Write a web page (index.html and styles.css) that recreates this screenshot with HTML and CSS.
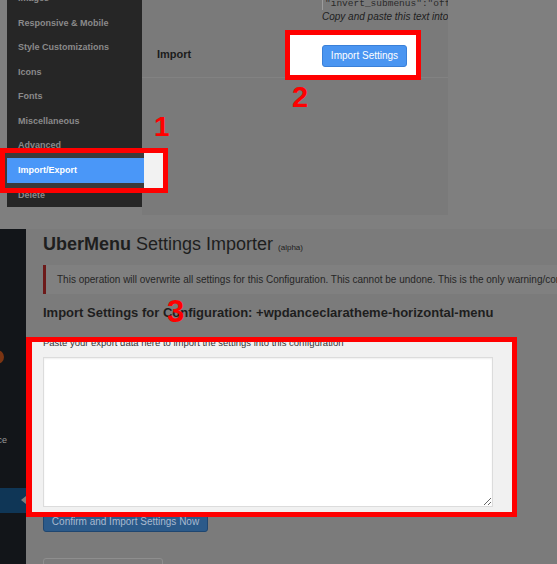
FILE: index.html
```html
<!DOCTYPE html>
<html lang="en">
<head>
<meta charset="utf-8">
<title>UberMenu Import/Export</title>
<link rel="stylesheet" href="styles.css">
</head>
<body>
<section class="shot-top">
  <nav class="um-nav">
    <div class="um-item um-first">Images</div>
    <div class="um-item">Responsive &amp; Mobile</div>
    <div class="um-item">Style Customizations</div>
    <div class="um-item">Icons</div>
    <div class="um-item">Fonts</div>
    <div class="um-item">Miscellaneous</div>
    <div class="um-item">Advanced</div>
    <div class="spot spot-nav"><div class="um-item um-active">Import/Export</div></div>
    <div class="um-item">Delete</div>
  </nav>
  <div class="um-panel">
    <div class="opt-row opt-export">
      <div class="opt-label"></div>
      <div class="opt-value">
        <div class="code-box">"invert_submenus":"off",</div>
        <p class="opt-desc">Copy and paste this text into</p>
      </div>
    </div>
    <div class="opt-row opt-import">
      <div class="opt-label">Import</div>
      <div class="opt-value">
        <div class="spot spot-btn"><button class="btn-blue" type="button">Import Settings</button></div>
      </div>
    </div>
  </div>
  <span class="callout callout-1">1</span>
  <span class="callout callout-2">2</span>
</section>
<section class="shot-bottom">
  <aside class="wp-menu">
    <div class="wp-ico"></div>
    <div class="wp-label"><span>Appearance</span></div>
    <div class="wp-active"></div>
  </aside>
  <main class="wp-main">
    <h1 class="imp-title"><strong>UberMenu</strong> Settings Importer <small>(alpha)</small></h1>
    <div class="notice">This operation will overwrite all settings for this Configuration. This cannot be undone. This is the only warning/confirmation you will receive.</div>
    <h3 class="imp-heading">Import Settings for Configuration: +wpdanceclaratheme-horizontal-menu</h3>
    <div class="spot spot-area">
      <p class="paste-hint"><span>Paste your export data here to import the settings into this configuration</span></p>
      <textarea class="import-data"></textarea>
    </div>
    <button class="btn-confirm" type="button">Confirm and Import Settings Now</button>
    <div class="ghost-box"></div>
  </main>
  <span class="callout callout-3">3</span>
</section>
</body>
</html>
```
FILE: styles.css
```css
* { box-sizing: border-box; }
html, body { margin: 0; padding: 0; }
body {
  width: 557px;
  height: 564px;
  overflow: hidden;
  background: #7b7b7b;
  font-family: "Liberation Sans", Arial, sans-serif;
}

/* ---------- top screenshot ---------- */
.shot-top {
  position: relative;
  height: 229px;
  display: flex;
  align-items: flex-start;
  background: #7f7f7f;
  overflow: hidden;
}
.um-nav {
  flex: none;
  margin-left: 7px;
  width: 135px;
  height: 207px;
  background: #262626;
  display: flex;
  flex-direction: column;
}
.um-item {
  flex: none;
  height: 24.6px;
  line-height: 24.6px;
  padding-left: 11px;
  font-size: 9px;
  font-weight: bold;
  color: #8a8a8a;
  white-space: nowrap;
}
.um-first { margin-top: -14.1px; }
.um-active {
  margin-left: 2px;
  width: 137px;
  background: #4a97f8;
  color: #ffffff;
}
.spot {
  position: relative;
  z-index: 1;
  border: 5px solid #ff0000;
}
.spot-nav {
  flex: none;
  width: 168px;
  margin: -10px 0 -10px -7px;
  padding: 5px 0;
  background: linear-gradient(to right, #3b3b3b 139px, #f2f2f2 139px);
}
.um-panel {
  flex: none;
  width: 306px;
  height: 215px;
  background: #7a7a7a;
  overflow: hidden;
}
.opt-row { display: flex; }
.opt-label {
  flex: none;
  width: 180px;
  padding-left: 15px;
  font-size: 11px;
  font-weight: bold;
  color: #1c1c1c;
}
.opt-value { flex: 1; min-width: 0; }
.code-box {
  margin-top: -4px;
  padding: 2px 0 1px 2px;
  border-left: 1px solid #9c9c9c;
  font-family: "Liberation Mono", monospace;
  font-size: 9.5px;
  line-height: 11px;
  color: #2a2a2a;
  white-space: nowrap;
}
.opt-desc {
  margin: 0.7px 0 0;
  font-size: 10px;
  line-height: 12px;
  font-style: italic;
  color: #202020;
  white-space: nowrap;
}
.opt-import {
  padding-top: 7.3px;
  align-items: center;
  border-bottom: 1px solid #828282;
}
.opt-import .opt-label { padding-top: 1px; }
.spot-btn {
  width: 136px;
  margin: 0 0 -3px -37px;
  padding: 10px 9px 8px 32px;
  background: #ffffff;
}
.btn-blue {
  display: block;
  width: 85px;
  height: 22px;
  padding: 0;
  background: #4a95f1;
  border: 1px solid #3a80d8;
  border-radius: 3px;
  color: #ffffff;
  font-family: "Liberation Sans", Arial, sans-serif;
  font-size: 10px;
}
.callout {
  position: absolute;
  color: #ff0000;
  font-weight: bold;
  font-size: 28px;
  line-height: 28px;
}
.callout-1 { left: 154px; top: 113px; }
.callout-2 { left: 292px; top: 83px; font-size: 29px; }

/* ---------- bottom screenshot ---------- */
.shot-bottom {
  position: relative;
  height: 335px;
  display: flex;
  overflow: hidden;
}
.wp-menu {
  flex: none;
  width: 26px;
  background: #121519;
  display: flex;
  flex-direction: column;
  overflow: hidden;
}
.wp-ico {
  flex: none;
  width: 14px;
  height: 14px;
  margin: 121px 0 0 -10px;
  border-radius: 50%;
  background: #7b3412;
}
.wp-label {
  flex: none;
  height: 12px;
  margin-top: 70px;
  padding-right: 19px;
  display: flex;
  justify-content: flex-end;
  font-size: 9px;
  line-height: 12px;
  color: #9a9a9a;
  white-space: nowrap;
}
.wp-active {
  flex: none;
  position: relative;
  height: 25px;
  margin-top: 42px;
  background: #0f3656;
}
.wp-active::after {
  content: "";
  position: absolute;
  right: 0;
  top: 8px;
  border-top: 4.5px solid transparent;
  border-bottom: 4.5px solid transparent;
  border-right: 5px solid #7f7f7f;
}
.wp-main {
  flex: 1;
  min-width: 0;
  padding: 4px 0 0 17px;
  background: #7b7b7b;
  overflow: hidden;
}
.imp-title {
  margin: 0;
  height: 22px;
  font-size: 18px;
  line-height: 22px;
  font-weight: normal;
  color: #1e1e1e;
  white-space: nowrap;
}
.imp-title strong { font-weight: bold; }
.imp-title small { font-size: 8px; line-height: 1; }
.notice {
  height: 29px;
  margin-top: 10px;
  padding: 8px 0 8px 11px;
  border-left: 3px solid #6d1a1a;
  background: #808080;
  font-size: 10px;
  line-height: 13px;
  color: #262626;
  white-space: nowrap;
  overflow: hidden;
}
.imp-heading {
  margin: 10.5px 0 0;
  font-size: 13px;
  line-height: 16px;
  font-weight: bold;
  color: #1e1e1e;
  white-space: nowrap;
}
.spot-area {
  width: 491px;
  margin: 16.5px 0 0 -17px;
  border-width: 5px 5px 5px 6px;
  padding: 0 19px 5px 11px;
  background: #f1f1f1;
}
.paste-hint {
  height: 7px;
  margin: 0;
  overflow: hidden;
  font-size: 9.5px;
  line-height: 12px;
  color: #333333;
  white-space: nowrap;
}
.paste-hint span { display: block; margin-top: -5px; }
.import-data {
  display: block;
  width: 450px;
  height: 150px;
  margin: 8px 0 0;
  border: 1px solid #dcdcdc;
  background: #ffffff;
  box-shadow: inset 0 1px 2px rgba(0, 0, 0, 0.07);
}
.btn-confirm {
  display: block;
  width: 165px;
  height: 22px;
  margin-top: -7px;
  padding: 0;
  background: #2b5a8a;
  border: 1px solid #1f4670;
  border-radius: 3px;
  color: #a9b9cf;
  font-family: "Liberation Sans", Arial, sans-serif;
  font-size: 10px;
}
.ghost-box {
  width: 120px;
  height: 24px;
  margin-top: 26px;
  border: 1px solid #8e8e8e;
  border-radius: 3px;
}
.callout-3 { left: 167px; top: 67px; font-size: 31px; line-height: 31px; }
```
